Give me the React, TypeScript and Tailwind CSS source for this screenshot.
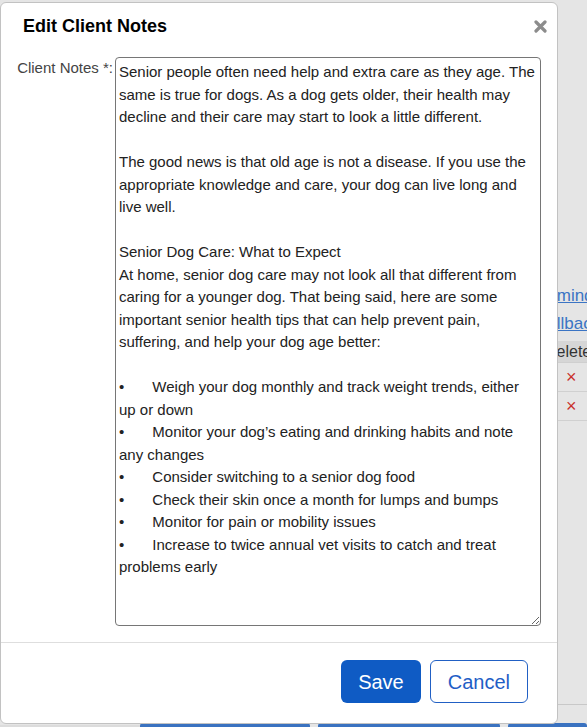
const notes = `Senior people often need help and extra care as they age. The same is true for dogs. As a dog gets older, their health may decline and their care may start to look a little different.

The good news is that old age is not a disease. If you use the appropriate knowledge and care, your dog can live long and live well.

Senior Dog Care: What to Expect
At home, senior dog care may not look all that different from caring for a younger dog. That being said, here are some important senior health tips that can help prevent pain, suffering, and help your dog age better:

•\tWeigh your dog monthly and track weight trends, either up or down
•\tMonitor your dog’s eating and drinking habits and note any changes
•\tConsider switching to a senior dog food
•\tCheck their skin once a month for lumps and bumps
•\tMonitor for pain or mobility issues
•\tIncrease to twice annual vet visits to catch and treat problems early`;

function CloseIcon() {
  return (
    <svg width="13" height="13" viewBox="0 0 13 13">
      <path d="M2 2 L11 11 M11 2 L2 11" stroke="#8c8c8c" strokeWidth="3.2" strokeLinecap="round" />
    </svg>
  );
}

function Background() {
  return (
    <div className="flex flex-col h-full">
      <div className="pt-[282px] pl-[535px] text-[17px]">
        <div className="h-[28px] leading-[28px] text-[#3b74c4] underline">Reminders</div>
        <div className="h-[28px] leading-[28px] text-[#3b74c4] underline">Callbacks</div>
      </div>
      <div className="mt-[3px] ml-[540px] text-[16px]">
        <div className="h-[22px] leading-[22px] bg-[#d6d6d6] pl-[5px] text-[#333] border-b border-[#cfcfcf]">Delete</div>
        <div className="h-[29px] flex items-center pl-[26px] text-[#c9302c] border-b border-[#d0d0d0] text-[18px]">×</div>
        <div className="h-[29px] flex items-center pl-[26px] text-[#c9302c] border-b border-[#d0d0d0] text-[18px]">×</div>
      </div>
      <div className="flex-1" />
      <div className="h-px bg-[#c8c8c8] ml-[540px]" />
      <div className="h-[18px]" />
      <div className="flex items-end h-[4px]">
        <div className="w-[140px] h-[2px] bg-[#dcdcdc]" />
        <div className="w-[170px] h-[4px] bg-[#3a72c0] rounded-t-[3px]" />
        <div className="w-[8px]" />
        <div className="w-[182px] h-[4px] bg-[#3a72c0] rounded-t-[3px]" />
        <div className="w-[8px]" />
        <div className="flex-1 h-[4px] bg-[#3a72c0] rounded-t-[3px]" />
      </div>
    </div>
  );
}

export default function App() {
  return (
    <div className="relative w-full h-[727px] overflow-hidden bg-[#e5e5e5] font-['Liberation_Sans',Arial,sans-serif]">
      <Background />

      {/* modal */}
      <div className="absolute left-0 top-[2px] w-[558px] h-[722px] bg-white rounded-[6px] border border-[#c2c2c2] flex flex-col">
        <div className="flex items-center justify-between pl-[22px] pr-[10px] pt-[10px]">
          <h2 className="text-[18px] leading-[26px] font-bold text-black">Edit Client Notes</h2>
          <CloseIcon />
        </div>

        <div className="flex pt-[18px]">
          <label className="w-[114px] text-right pr-[2px] text-[15px] leading-[22.5px] text-[#444]">
            Client Notes *:
          </label>
          <textarea
            defaultValue={notes}
            className="w-[426px] h-[569px] border border-[#767676] rounded-[4px] px-[3px] py-[3px] text-[15px] leading-[22.5px] text-[#222] outline-none [tab-size:8] font-['Liberation_Sans',Arial,sans-serif]"
          />
        </div>

        <div className="mt-[16px] border-t border-[#dedede] flex justify-end gap-[9px] pr-[29px] pt-[17px]">
          <button className="h-[43px] px-[17px] rounded-[6px] bg-[#0f5bc4] text-white text-[20px]">Save</button>
          <button className="h-[43px] px-[17px] rounded-[6px] border border-[#2160c4] bg-white text-[#1f5ec6] text-[20px]">
            Cancel
          </button>
        </div>
      </div>
    </div>
  );
}
